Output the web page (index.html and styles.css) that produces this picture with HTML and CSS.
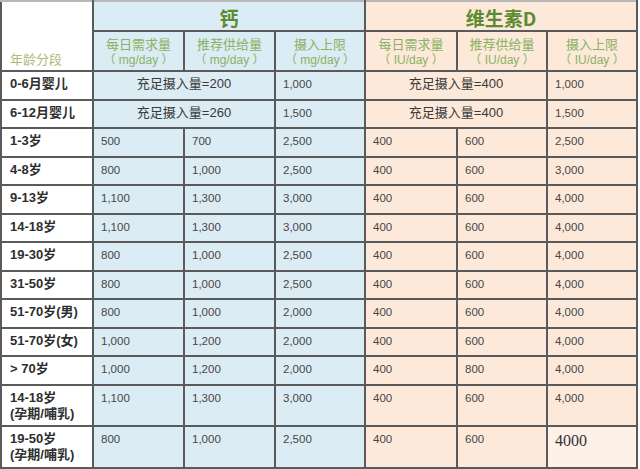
FILE: index.html
```html
<!DOCTYPE html>
<html lang="zh">
<head>
<meta charset="utf-8">
<title>钙与维生素D推荐摄入量</title>
<link rel="stylesheet" href="styles.css">
</head>
<body>
<table class="intake">
  <colgroup>
    <col class="c-age"><col class="c-n"><col class="c-n"><col class="c-n2"><col class="c-n3"><col class="c-n2"><col class="c-n2">
  </colgroup>
  <thead>
    <tr class="h1">
      <th class="age-head" rowspan="2">年龄分段</th>
      <th class="grp ca" colspan="3">钙</th>
      <th class="grp vd" colspan="3">维生素D</th>
    </tr>
    <tr class="h2">
      <th class="sub ca">每日需求量<span class="unit">（ mg/day ）</span></th>
      <th class="sub ca">推荐供给量<span class="unit">（ mg/day ）</span></th>
      <th class="sub ca">摄入上限<span class="unit">（ mg/day ）</span></th>
      <th class="sub vd">每日需求量<span class="unit">（ IU/day ）</span></th>
      <th class="sub vd">推荐供给量<span class="unit">（ IU/day ）</span></th>
      <th class="sub vd">摄入上限<span class="unit">（ IU/day ）</span></th>
    </tr>
  </thead>
  <tbody>
    <tr class="r">
      <th class="lbl">0-6月婴儿</th>
      <td class="ca merged" colspan="2">充足摄入量=200</td><td class="ca">1,000</td>
      <td class="vd merged" colspan="2">充足摄入量=400</td><td class="vd">1,000</td>
    </tr>
    <tr class="r">
      <th class="lbl">6-12月婴儿</th>
      <td class="ca merged" colspan="2">充足摄入量=260</td><td class="ca">1,500</td>
      <td class="vd merged" colspan="2">充足摄入量=400</td><td class="vd">1,500</td>
    </tr>
    <tr class="r"><th class="lbl">1-3岁</th><td class="ca">500</td><td class="ca">700</td><td class="ca">2,500</td><td class="vd">400</td><td class="vd">600</td><td class="vd">2,500</td></tr>
    <tr class="r"><th class="lbl">4-8岁</th><td class="ca">800</td><td class="ca">1,000</td><td class="ca">2,500</td><td class="vd">400</td><td class="vd">600</td><td class="vd">3,000</td></tr>
    <tr class="r"><th class="lbl">9-13岁</th><td class="ca">1,100</td><td class="ca">1,300</td><td class="ca">3,000</td><td class="vd">400</td><td class="vd">600</td><td class="vd">4,000</td></tr>
    <tr class="r"><th class="lbl">14-18岁</th><td class="ca">1,100</td><td class="ca">1,300</td><td class="ca">3,000</td><td class="vd">400</td><td class="vd">600</td><td class="vd">4,000</td></tr>
    <tr class="r"><th class="lbl">19-30岁</th><td class="ca">800</td><td class="ca">1,000</td><td class="ca">2,500</td><td class="vd">400</td><td class="vd">600</td><td class="vd">4,000</td></tr>
    <tr class="r"><th class="lbl">31-50岁</th><td class="ca">800</td><td class="ca">1,000</td><td class="ca">2,500</td><td class="vd">400</td><td class="vd">600</td><td class="vd">4,000</td></tr>
    <tr class="r"><th class="lbl">51-70岁(男)</th><td class="ca">800</td><td class="ca">1,000</td><td class="ca">2,000</td><td class="vd">400</td><td class="vd">600</td><td class="vd">4,000</td></tr>
    <tr class="r"><th class="lbl">51-70岁(女)</th><td class="ca">1,000</td><td class="ca">1,200</td><td class="ca">2,000</td><td class="vd">400</td><td class="vd">600</td><td class="vd">4,000</td></tr>
    <tr class="r"><th class="lbl">&gt; 70岁</th><td class="ca">1,000</td><td class="ca">1,200</td><td class="ca">2,000</td><td class="vd">400</td><td class="vd">800</td><td class="vd">4,000</td></tr>
    <tr class="r2"><th class="lbl">14-18岁<br>(孕期/哺乳)</th><td class="ca">1,100</td><td class="ca">1,300</td><td class="ca">3,000</td><td class="vd">400</td><td class="vd">600</td><td class="vd">4,000</td></tr>
    <tr class="r3"><th class="lbl">19-50岁<br>(孕期/哺乳)</th><td class="ca">800</td><td class="ca">1,000</td><td class="ca">2,500</td><td class="vd">400</td><td class="vd">600</td><td class="vd serif">4000</td></tr>
  </tbody>
</table>
</body>
</html>
```
FILE: styles.css
```css
html, body {
  margin: 0;
  padding: 0;
  background: #ffffff;
}

body {
  font-family: "Liberation Sans", "Noto Sans CJK SC", sans-serif;
  color: #444;
}

.intake {
  border-collapse: collapse;
  table-layout: fixed;
  width: 638px;
}

.c-age { width: 92px; }
.c-n { width: 91px; }
.c-n2 { width: 90px; }
.c-n3 { width: 92px; }

.intake th,
.intake td {
  border: 2px solid #5a5a5a;
  padding: 0;
  overflow: hidden;
  white-space: nowrap;
}

.ca { background: #dbecf4; }
.vd { background: #fce9da; }

/* header */
.h1 { height: 30px; }
.h1 th { border-top-color: #b8b8b8; }
.h2 { height: 40px; }

.age-head {
  background: #ffffff;
  vertical-align: bottom;
  text-align: left;
  padding: 0 0 3px 8px !important;
  font-family: "Noto Sans CJK SC", sans-serif;
  font-weight: normal;
  font-size: 13px;
  line-height: 16px;
  color: #b0b97a;
}

.grp {
  font-family: "Noto Sans CJK SC", sans-serif;
  font-size: 19px;
  font-weight: bold;
  line-height: 22px;
  color: #5d8b31;
  text-align: center;
  vertical-align: middle;
  padding-top: 3px !important;
}

.sub {
  font-family: "Noto Sans CJK SC", sans-serif;
  font-weight: normal;
  font-size: 13px;
  line-height: 17px;
  color: #8ab263;
  text-align: center;
  vertical-align: middle;
}

.unit {
  display: block;
  font-family: "Liberation Sans", "Noto Sans CJK SC", sans-serif;
  font-size: 12px;
  line-height: 16px;
}

/* body */
.r { height: 28.5px; }
.r2 { height: 41px; }
.r3 { height: 42px; }

.intake td {
  vertical-align: top;
  text-align: left;
  font-size: 11.5px;
  line-height: 15px;
  padding: 5px 0 0 7px;
  color: #474747;
}

.lbl {
  background: #ffffff;
  text-align: left;
  vertical-align: top;
  font-family: "Liberation Sans", "Noto Sans CJK SC", sans-serif;
  font-weight: bold;
  font-size: 13px;
  line-height: 16px;
  padding: 4px 0 0 8px !important;
  color: #2e2e2e;
}

.intake td.merged {
  text-align: center;
  font-family: "Liberation Sans", "Noto Sans CJK SC", sans-serif;
  font-size: 13px;
  line-height: 16px;
  padding: 4px 0 0 0;
  color: #3a3a3a;
}

.intake td.serif {
  font-family: "Liberation Serif", serif;
  font-size: 16px;
  line-height: 18px;
  padding-top: 5px;
  color: #333;
  background: #fdf1e8;
}
```
